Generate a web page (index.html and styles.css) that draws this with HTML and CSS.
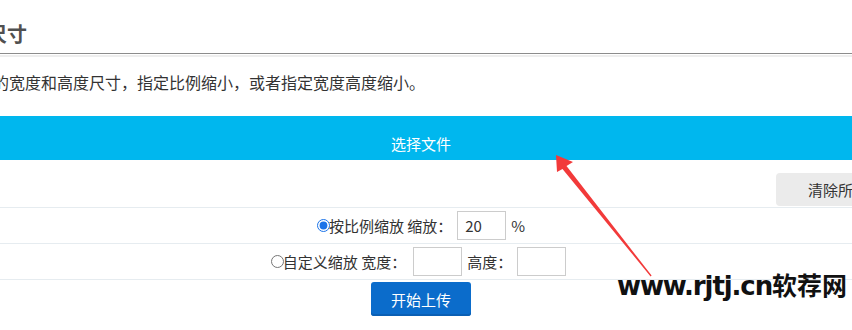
FILE: index.html
```html
<!DOCTYPE html>
<html lang="zh-CN">
<head>
<meta charset="utf-8">
<title>图片尺寸</title>
<link rel="stylesheet" href="styles.css">
</head>
<body>
<div class="page">
  <div class="wrap">
    <div class="head"><h2 class="title">尺寸</h2></div>
    <div class="head-shadow"></div>
    <p class="desc">的宽度和高度尺寸，指定比例缩小，或者指定宽度高度缩小。</p>
    <div class="pick">选择文件</div>
    <div class="toolbar"><button class="btn-clear">清除所有</button></div>
    <div class="row">
      <input type="radio" name="mode" class="radio" checked>
      <span class="lbl">按比例缩放 缩放：</span>
      <input type="text" class="box" value="20">
      <span class="lbl">%</span>
    </div>
    <div class="row">
      <input type="radio" name="mode" class="radio">
      <span class="lbl">自定义缩放 宽度：</span>
      <input type="text" class="box box-w" value="">
      <span class="lbl">高度：</span>
      <input type="text" class="box" value="">
    </div>
    <div class="actions"><button class="btn-upload">开始上传</button></div>
  </div>
  <svg class="arrow" width="852" height="330" viewBox="0 0 852 330">
    <polygon points="556,155 573,162 566.5,166 651.6,275.6 650.6,276.4 562.5,169 557,172" fill="#f23a3a"/>
  </svg>
  <div class="mark">www.rjtj.cn<span class="mark-cn">软荐网</span></div>
</div>
</body>
</html>
```
FILE: styles.css
```css
html, body {
  margin: 0;
  padding: 0;
  background: #fff;
}
body {
  width: 852px;
  height: 330px;
  overflow: hidden;
  font-family: "Noto Sans CJK SC", "Noto Sans", sans-serif;
  color: #333;
}
.page {
  position: relative;
  width: 852px;
  height: 330px;
  overflow: hidden;
}
.wrap {
  width: 882px;
  margin-left: -20px;
}
.head {
  padding: 20px 0 5px 7px;
  border-bottom: 1px solid #8c8c8c;
}
.title {
  margin: 0;
  font-size: 20px;
  line-height: 28px;
  font-weight: 700;
  color: #505050;
  white-space: nowrap;
}
.head-shadow {
  height: 2px;
  margin-top: 1px;
  background: #eeeeee;
}
.desc {
  margin: 13px 0 0 0;
  padding-left: 13px;
  font-size: 16px;
  line-height: 24px;
  white-space: nowrap;
  color: #333;
}
.pick {
  margin-top: 22px;
  height: 44px;
  box-sizing: border-box;
  padding-top: 18px;
  background: #00b7ee;
  color: #fff;
  text-align: center;
  font-size: 15px;
  line-height: 20px;
}
.toolbar {
  display: flex;
  justify-content: flex-end;
  padding: 13px 0 1px;
  border-bottom: 1px solid #e6ecf0;
}
.btn-clear {
  height: 33px;
  margin-right: -38px;
  padding: 0 32px;
  border: none;
  border-radius: 4px;
  background: #ebebeb;
  color: #333;
  font-family: inherit;
  font-size: 15px;
  white-space: nowrap;
}
.row {
  display: flex;
  justify-content: center;
  align-items: center;
  height: 35px;
  border-bottom: 1px solid #e6ecf0;
  font-size: 15px;
}
.radio {
  width: 13px;
  height: 13px;
  margin: 0 -1px 0 0;
  accent-color: #1a73e8;
}
.lbl {
  white-space: nowrap;
}
.box {
  width: 49px;
  height: 29px;
  box-sizing: border-box;
  margin: 0 5px 0 5px;
  padding: 0 0 0 7px;
  border: 1px solid #cccccc;
  font-family: inherit;
  font-size: 15px;
  color: #333;
  outline: none;
}
.box-w {
  margin-left: 7px;
}
.actions {
  display: flex;
  justify-content: center;
  padding-top: 2px;
}
.btn-upload {
  width: 100px;
  height: 34px;
  border: none;
  border-radius: 3px;
  background: #0b6ccb;
  box-shadow: inset 0 -2px 0 #0a5fb4;
  color: #fff;
  font-family: inherit;
  font-size: 15px;
}
.arrow {
  position: absolute;
  left: 0;
  top: 0;
  pointer-events: none;
}
.mark {
  position: absolute;
  left: 617px;
  top: 266px;
  font-family: "DejaVu Sans", "Noto Sans CJK SC", sans-serif;
  font-weight: 700;
  font-size: 26px;
  line-height: 36px;
  letter-spacing: -1.1px;
  color: #111;
  white-space: nowrap;
}
.mark-cn {
  font-family: "Noto Sans CJK SC", sans-serif;
  font-size: 25px;
  letter-spacing: 0;
}
```
